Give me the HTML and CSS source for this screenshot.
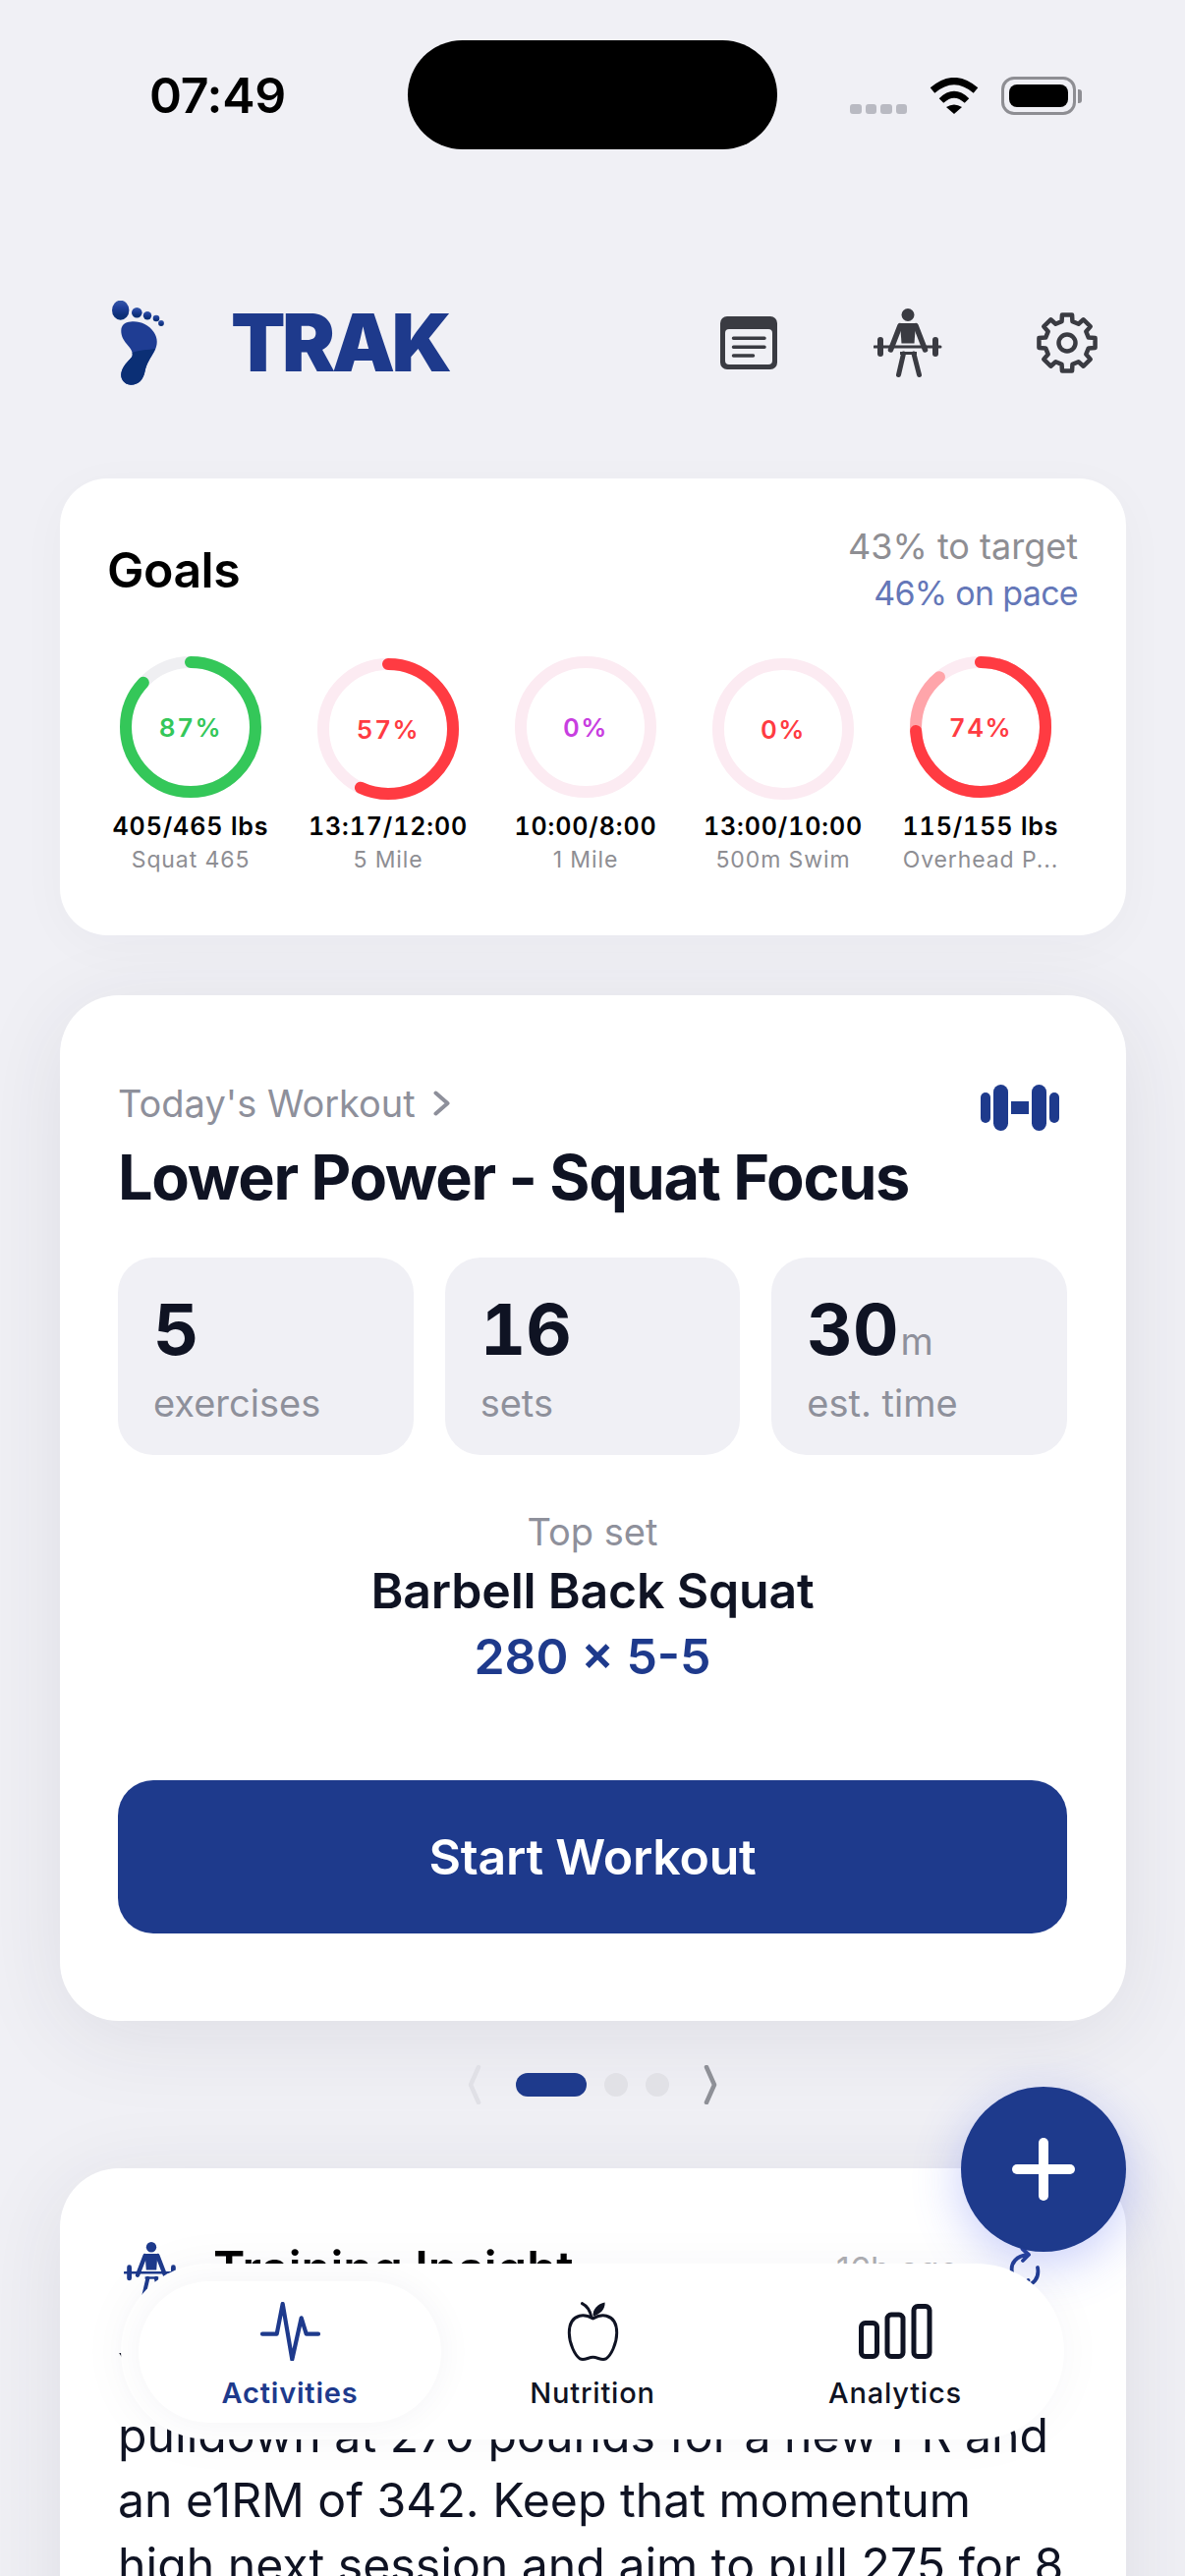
FILE: index.html
```html
<!DOCTYPE html>
<html lang="en">
<head>
<meta charset="utf-8">
<title>TRAK</title>
<link rel="stylesheet" href="styles.css">
</head>
<body>
<svg class="defs" width="0" height="0" aria-hidden="true">
  <symbol id="lifter" viewBox="0 0 70 71">
    <circle cx="35" cy="6.5" r="6.5" fill="currentColor"/>
    <path d="M27 15h16l-1.5 20.5h-13z" fill="currentColor"/>
    <path d="M27 17.500L17.500 42M43 17.500L52.500 42" fill="none" stroke="currentColor" stroke-width="5.500" stroke-linecap="round"/>
    <path d="M1 39H68" stroke="currentColor" stroke-width="3" stroke-linecap="round"/>
    <rect x="4" y="29" width="6" height="20" rx="3" fill="currentColor"/>
    <rect x="60" y="29" width="6" height="20" rx="3" fill="currentColor"/>
    <path d="M27 44h17l0 3H27z" fill="currentColor"/>
    <path d="M30.500 46L25.500 67.500M41 46L46.500 67.500" fill="none" stroke="currentColor" stroke-width="5" stroke-linecap="round"/>
  </symbol>
</svg>
<main class="screen">
  <div class="status">
    <span class="time">07:49</span>
    <span class="island"></span>
    <span class="signal"><i></i><i></i><i></i><i></i></span>
    <svg class="wifi" viewBox="0 0 50 37">
      <path d="M3 13Q25-6 47 13" fill="none" stroke="#000" stroke-width="7"/>
      <path d="M12 23.500Q25 11 38 23.500" fill="none" stroke="#000" stroke-width="6.500"/>
      <path d="M17 30Q25 25 33 30L25 37z"/>
    </svg>
    <span class="battery"><span class="battery-fill"></span></span>
    <span class="battery-cap"></span>
  </div>

  <header class="top">
    <svg class="foot" viewBox="0 0 53 86">
      <defs>
        <linearGradient id="footfill" x1="0" y1="0" x2="0" y2="1">
          <stop offset="0" stop-color="#3658a8"/>
          <stop offset=".35" stop-color="#20409a"/>
          <stop offset=".75" stop-color="#0c3079"/>
          <stop offset="1" stop-color="#0a2f73"/>
        </linearGradient>
      </defs>
      <g fill="url(#footfill)">
        <ellipse cx="8.700" cy="9.700" rx="8.700" ry="10"/>
        <circle cx="25.300" cy="12.300" r="5.300"/>
        <circle cx="36" cy="15.300" r="4.200"/>
        <circle cx="45" cy="18" r="3.300"/>
        <circle cx="50" cy="23" r="2.900"/>
      </g>
      <path d="M19 21.500C28 20.500 37 24 42.500 32C47 39 46.500 45 43 52C39 59 35 64 33.500 72C32 81 26 86 19 85.700C12 85.300 8 79 9.500 73C11 66.500 16 62 20 57.500C22 54 20 50 16.500 46C12 41 9 36 9.300 30C9.500 25 13 22 19 21.500Z" fill="#1f3d93"/>
      <path d="M20.500 53C28 50 37 50 44 49C39 59 35 64 33.500 72C32 81 26 86 19 85.700C12 85.300 8 79 9.500 73C11 66.500 16 62 20 57.500C21 56 21 54.500 20.500 53Z" fill="#0b2f75"/>
    </svg>
    <span class="brand">TRAK</span>
    <nav class="top-icons">
      <svg class="ic-doc" viewBox="0 0 58 54">
        <rect width="58" height="54" rx="7" fill="#3a3b42"/>
        <rect x="5" y="13" width="48" height="36" rx="4" fill="#f0f0f5"/>
        <path d="M13.500 22.300H45M13.500 31.300H45M13.500 40H33.500" stroke="#3a3b42" stroke-width="3.500" stroke-linecap="round"/>
      </svg>
      <svg class="ic-lift"><use href="#lifter"/></svg>
      <svg class="ic-gear" viewBox="-32 -32 64 64">
        <path d="M21.830-5.440L28.560-5.040L28.560 5.040L21.830 5.440L19.290 11.590L23.750 16.630L16.630 23.750L11.590 19.290L5.440 21.830L5.040 28.560L-5.040 28.560L-5.440 21.830L-11.590 19.290L-16.630 23.750L-23.750 16.630L-19.290 11.590L-21.830 5.440L-28.560 5.040L-28.560-5.040L-21.830-5.440L-19.290-11.590L-23.750-16.630L-16.630-23.750L-11.590-19.290L-5.440-21.830L-5.040-28.560L5.040-28.560L5.440-21.830L11.590-19.290L16.630-23.750L23.750-16.630L19.290-11.590Z" fill="none" stroke="#3a3b42" stroke-width="4.500" stroke-linejoin="round"/>
        <circle r="8.500" fill="none" stroke="#3a3b42" stroke-width="4.500"/>
      </svg>
    </nav>
  </header>

  <section class="card goals">
    <div class="goals-head">
      <h2 class="goals-title">Goals</h2>
      <div class="goals-meta">
        <div class="meta-target">43% to target</div>
        <div class="meta-pace">46% on pace</div>
      </div>
    </div>
    <div class="goals-row">
      <div class="goal">
        <div class="ring"><svg viewBox="0 0 144 144"><circle class="ring-track track-grey" cx="72" cy="72" r="66"/><circle class="ring-arc arc-green" cx="72" cy="72" r="66" pathLength="100" stroke-dasharray="87 100"/></svg><span class="ring-pct pct-green">87%</span></div>
        <div class="goal-val">405/465 lbs</div>
        <div class="goal-name">Squat 465</div>
      </div>
      <div class="goal goal-low">
        <div class="ring"><svg viewBox="0 0 144 144"><circle class="ring-track track-pink" cx="72" cy="72" r="66"/><circle class="ring-arc arc-red" cx="72" cy="72" r="66" pathLength="100" stroke-dasharray="57 100"/></svg><span class="ring-pct pct-red">57%</span></div>
        <div class="goal-val">13:17/12:00</div>
        <div class="goal-name">5 Mile</div>
      </div>
      <div class="goal">
        <div class="ring"><svg viewBox="0 0 144 144"><circle class="ring-track track-pink" cx="72" cy="72" r="66"/></svg><span class="ring-pct pct-purple">0%</span></div>
        <div class="goal-val">10:00/8:00</div>
        <div class="goal-name">1 Mile</div>
      </div>
      <div class="goal goal-low">
        <div class="ring"><svg viewBox="0 0 144 144"><circle class="ring-track track-pink" cx="72" cy="72" r="66"/></svg><span class="ring-pct pct-red">0%</span></div>
        <div class="goal-val">13:00/10:00</div>
        <div class="goal-name">500m Swim</div>
      </div>
      <div class="goal">
        <div class="ring"><svg viewBox="0 0 144 144"><circle class="ring-track track-pink" cx="72" cy="72" r="66"/><circle class="ring-arc arc-pale" cx="72" cy="72" r="66" pathLength="100" stroke-dasharray="89 100"/><circle class="ring-arc arc-red" cx="72" cy="72" r="66" pathLength="100" stroke-dasharray="74 100"/></svg><span class="ring-pct pct-red">74%</span></div>
        <div class="goal-val">115/155 lbs</div>
        <div class="goal-name">Overhead P...</div>
      </div>
    </div>
  </section>

  <section class="card workout">
    <div class="workout-head">
      <div class="eyebrow">Today's Workout
        <svg class="eyebrow-chev" viewBox="0 0 17 26"><path d="M2.500 2.500L14.500 13L2.500 23.500" fill="none" stroke="#8e909b" stroke-width="4" stroke-linecap="round" stroke-linejoin="round"/></svg>
      </div>
      <svg class="dumbbell" viewBox="0 0 80 47">
        <g fill="#1e3a8c">
          <rect x="0" y="8" width="10" height="31" rx="5"/>
          <rect x="13" y="0" width="15" height="47" rx="7.500"/>
          <rect x="31" y="17" width="18" height="13"/>
          <rect x="52" y="0" width="15" height="47" rx="7.500"/>
          <rect x="70" y="8" width="10" height="31" rx="5"/>
        </g>
      </svg>
    </div>
    <h1 class="workout-title">Lower Power - Squat Focus</h1>
    <div class="stats">
      <div class="stat"><div class="stat-num">5</div><div class="stat-label">exercises</div></div>
      <div class="stat"><div class="stat-num">16</div><div class="stat-label">sets</div></div>
      <div class="stat"><div class="stat-num">30<span class="stat-unit">m</span></div><div class="stat-label">est. time</div></div>
    </div>
    <div class="topset-label">Top set</div>
    <div class="topset-name">Barbell Back Squat</div>
    <div class="topset-value">280 × 5-5</div>
    <button class="start" type="button">Start Workout</button>
  </section>

  <div class="pager">
    <svg class="pager-chev" viewBox="0 0 14 40"><path d="M11 2L3 20L11 38" fill="none" stroke="#e0e0e6" stroke-width="4.500" stroke-linecap="round" stroke-linejoin="round"/></svg>
    <span class="dots"><i class="dot dot-on"></i><i class="dot"></i><i class="dot"></i></span>
    <svg class="pager-chev" viewBox="0 0 14 40"><path d="M3 2L11 20L3 38" fill="none" stroke="#8e9097" stroke-width="4.500" stroke-linecap="round" stroke-linejoin="round"/></svg>
  </div>

  <section class="card insight">
    <div class="insight-head">
      <svg class="insight-icon"><use href="#lifter"/></svg>
      <h3 class="insight-title">Training Insight</h3>
      <span class="insight-time">16h ago</span>
      <svg class="refresh" viewBox="0 0 32 44">
        <path d="M3 25C1 15 8 8 19 7M13.500 1L20 7L14 13M29 20C31 31 25 38 14 39M19.500 33L13 39L19 44" fill="none" stroke="#1e3a8c" stroke-width="3.800" stroke-linecap="round" stroke-linejoin="round"/>
      </svg>
    </div>
    <p class="insight-body">You crushed your last session, hitting lat pulldown at 270 pounds for a new PR and an e1RM of 342. Keep that momentum high next session and aim to pull 275 for 8 reps.</p>
  </section>

  <button class="fab" type="button" aria-label="Add"><span class="fab-plus"></span></button>

  <nav class="tabbar">
    <a class="tab tab-on">
      <svg class="tab-icon" viewBox="0 0 59 60"><path d="M1 32.700H15.700L21.700 2L31.300 58.500L40.700 16.300L45.700 32.700H58" fill="none" stroke="#1e3a8c" stroke-width="4.200" stroke-linecap="round" stroke-linejoin="round"/></svg>
      <span class="tab-label">Activities</span>
    </a>
    <a class="tab">
      <svg class="tab-icon" viewBox="0 0 49 57"><path d="M24.500 16C20 13.500 15 12.500 11.500 13.500C4 15.500 1.500 23 1.500 30C1.500 40 7 52 12 55C16 57 20 53.500 24.500 53.500C29 53.500 33 57 37 55C42 52 47.500 40 47.500 30C47.500 23 45 15.500 37.500 13.500C34 12.500 29 13.500 24.500 16Z" fill="none" stroke="#0f1323" stroke-width="2.800"/><path d="M14 1.500C19 4 22 9 23 15" fill="none" stroke="#0f1323" stroke-width="2.800" stroke-linecap="round"/><path d="M24.500 14C24 7 29 2 36 .5C36.500 7 31.500 12 24.500 14Z" fill="#0f1323"/></svg>
      <span class="tab-label">Nutrition</span>
    </a>
    <a class="tab">
      <svg class="tab-icon" viewBox="0 0 75 56"><g fill="none" stroke="#0f1323" stroke-width="5"><rect x="2.500" y="19.500" width="16" height="34" rx="4"/><rect x="29" y="11" width="16" height="42.500" rx="4"/><rect x="56" y="2.500" width="16" height="51" rx="4"/></g></svg>
      <span class="tab-label">Analytics</span>
    </a>
  </nav>
</main>
</body>
</html>
```

FILE: styles.css
```css
* { box-sizing: border-box; margin: 0; padding: 0; }
html, body { width: 1206px; height: 2622px; overflow: hidden; background: #f0f0f5; }
body { font-family: Inter, "Liberation Sans", sans-serif; color: #000; }
.defs { position: absolute; }
.screen { position: relative; width: 1206px; height: 2622px; overflow: hidden; background: #f0f0f5; }

/* status bar */
.status { display: flex; height: 152px; padding: 41px 0 0 152px; }
.time { width: 263px; height: 36px; margin-top: 38px; font-size: 50px; line-height: 36px; font-weight: 600; letter-spacing: -0.3px; }
.island { width: 376px; height: 111px; border-radius: 56px; background: #000; }
.signal { display: flex; gap: 4px; width: 58px; height: 10px; margin: 65px 0 0 74px; }
.signal i { width: 11.500px; height: 10px; border-radius: 3px; background: #b9bac2; }
.wifi { width: 50px; height: 37px; margin: 38px 0 0 23px; }
.battery { display: block; width: 76px; height: 39px; margin: 37px 0 0 23px; padding: 5px; border: 3px solid #8e8e93; border-radius: 13px; }
.battery-fill { display: block; height: 100%; border-radius: 8px; background: #000; }
.battery-cap { width: 4px; height: 14px; margin: 50px 0 0 2px; border-radius: 0 3px 3px 0; background: #8e8e93; }

/* header */
.top { display: flex; align-items: center; height: 94px; margin: 150px 0 91px; padding: 0 88px 0 114px; }
.foot { width: 53px; height: 86px; }
.brand { margin-left: 68px; font-size: 81px; line-height: 94px; font-weight: 900; letter-spacing: -3.500px; color: #1e3a8c; }
.top-icons { display: flex; align-items: center; margin-left: auto; }
.ic-doc { width: 58px; height: 54px; }
.ic-lift { width: 70px; height: 71px; margin: 0 95.500px 0 98px; color: #3a3b42; }
.ic-gear { width: 64px; height: 64px; }

/* cards */
.card { margin: 0 60px 0 61px; background: #fff; }

/* goals */
.goals { height: 465px; padding-top: 46px; border-radius: 48px; box-shadow: 0 10px 50px rgba(40, 40, 70, .03); }
.goals-head { display: flex; justify-content: space-between; align-items: center; height: 94px; padding: 0 49px 0 48px; }
.goals-title { font-size: 50px; line-height: 60px; font-weight: 600; letter-spacing: -.5px; }
.goals-meta { text-align: right; line-height: 47px; }
.meta-target { font-size: 36px; color: #8e8e93; }
.meta-pace { font-size: 34px; letter-spacing: -.7px; color: #6477b8; }
.goals-row { display: grid; grid-template-columns: repeat(5, 201px); margin: 41px 0 0 32.500px; }
.goal { display: flex; flex-direction: column; align-items: center; white-space: nowrap; }
.goal-low .ring { margin-top: 2px; margin-bottom: -2px; }
.ring { position: relative; width: 144px; height: 144px; }
.ring svg { display: block; width: 144px; height: 144px; }
.ring-track, .ring-arc { fill: none; stroke-width: 12; }
.ring-arc { stroke-linecap: round; transform: rotate(-90deg); transform-origin: 72px 72px; }
.track-grey { stroke: #efeff2; }
.track-pink { stroke: #fcebf2; }
.arc-green { stroke: #34c759; }
.arc-red { stroke: #ff3b42; }
.arc-pale { stroke: #ffa5aa; }
.ring-pct { position: absolute; inset: 0; display: flex; align-items: center; justify-content: center; font-size: 26px; font-weight: 600; letter-spacing: 1.500px; font-variant-numeric: tabular-nums; }
.pct-green { color: #34c759; }
.pct-red { color: #ff3b42; }
.pct-purple { color: #c83ee0; }
.goal-val { margin-top: 12px; font-size: 25px; line-height: 34px; font-weight: 600; letter-spacing: .9px; font-variant-numeric: tabular-nums; }
.goal-name { font-size: 23px; line-height: 34px; color: #8e8e93; letter-spacing: .9px; }

/* workout */
.workout { height: 1044px; margin-top: 61px; padding: 87px 60px 0 59px; border-radius: 60px; box-shadow: 0 16px 90px rgba(40, 40, 70, .09); text-align: center; }
.workout-head { display: flex; justify-content: space-between; align-items: flex-start; height: 46px; padding-right: 8px; }
.eyebrow { display: flex; align-items: center; gap: 18px; font-size: 38px; line-height: 46px; color: #8e909b; }
.eyebrow-chev { width: 17px; height: 26px; }
.dumbbell { width: 80px; height: 47px; margin-top: 4px; }
.workout-title { height: 76px; margin-top: 14px; text-align: left; font-size: 63px; line-height: 76px; font-weight: 700; letter-spacing: -1.300px; color: #0f1323; white-space: nowrap; }
.stats { display: grid; grid-template-columns: repeat(3, 1fr); gap: 32px; margin-top: 44px; }
.stat { height: 201px; padding: 33px 0 0 36px; border-radius: 36px; background: #f0f0f5; text-align: left; }
.stat-num { height: 80px; font-size: 72px; line-height: 80px; font-weight: 700; color: #0f1323; font-variant-numeric: tabular-nums; }
.stat-unit { margin-left: 2px; font-size: 38px; font-weight: 400; color: #8e909b; }
.stat-label { margin-top: 12px; font-size: 38px; line-height: 46px; color: #8e909b; }
.topset-label { margin-top: 54px; font-size: 38px; line-height: 48px; color: #8e909b; }
.topset-name { margin-top: 8px; font-size: 50px; line-height: 56px; font-weight: 600; letter-spacing: -.2px; color: #0f1323; }
.topset-value { margin-top: 8px; font-size: 50px; line-height: 62px; font-weight: 600; color: #1e3a8c; }
.start { display: block; width: 100%; height: 156px; margin-top: 95px; border: 0; border-radius: 36px; background: #1e3a8c; color: #fff; font: 600 50px Inter, sans-serif; letter-spacing: -.2px; }

/* pager */
.pager { display: flex; justify-content: center; align-items: center; gap: 35px; height: 24px; margin-top: 53px; }
.pager-chev { width: 14px; height: 40px; margin: -8px 0; }
.dots { display: flex; gap: 18px; }
.dot { width: 24px; height: 24px; border-radius: 12px; background: #e1e1e6; }
.dot-on { width: 72px; background: #1e3a8c; }

/* insight */
.insight { height: 500px; margin-top: 73px; padding: 73px 50px 0 59px; border-radius: 60px 60px 0 0; box-shadow: 0 16px 90px rgba(40, 40, 70, .09); }
.insight-head { display: flex; align-items: center; height: 60px; padding-right: 10px; }
.insight-icon { width: 56px; height: 57px; margin-left: 6px; color: #1e3a8c; }
.insight-title { margin-left: 35px; font-size: 49px; line-height: 60px; font-weight: 600; }
.insight-time { margin-left: auto; font-size: 34px; line-height: 60px; color: #aeaeb2; }
.refresh { width: 32px; height: 44px; margin: 0 27px 0 51px; }
.insight-body { margin-top: 40px; font-size: 48.200px; line-height: 66px; color: #0f1323; }

/* fab */
.fab { position: absolute; left: 978px; top: 2124px; width: 168px; height: 168px; border: 0; border-radius: 50%; background: #1e3a8c; box-shadow: 0 12px 50px rgba(80, 100, 240, .32); }
.fab-plus { position: absolute; left: 52px; top: 79px; width: 64px; height: 10px; border-radius: 5px; background: #fff; }
.fab-plus::after { content: ""; position: absolute; left: 27px; top: -27px; width: 10px; height: 64px; border-radius: 5px; background: #fff; }

/* tab bar */
.tabbar { position: absolute; left: 123px; top: 2304px; display: flex; width: 960px; height: 179px; padding: 18px; border-radius: 90px; background: #fff; box-shadow: 0 0 50px rgba(40, 40, 70, .04); }
.tab { display: flex; flex: 1; flex-direction: column; align-items: center; height: 144px; padding-top: 21px; border-radius: 72px; color: #0f1323; }
.tab-on { background: #fff; box-shadow: 0 0 36px rgba(40, 40, 70, .05); color: #1e3a8c; }
.tab-icon { height: 60px; width: 75px; }
.tab-label { margin-top: 15px; font-size: 29px; line-height: 36px; font-weight: 500; letter-spacing: .8px; }
.tab-on .tab-label { font-weight: 600; }
```
